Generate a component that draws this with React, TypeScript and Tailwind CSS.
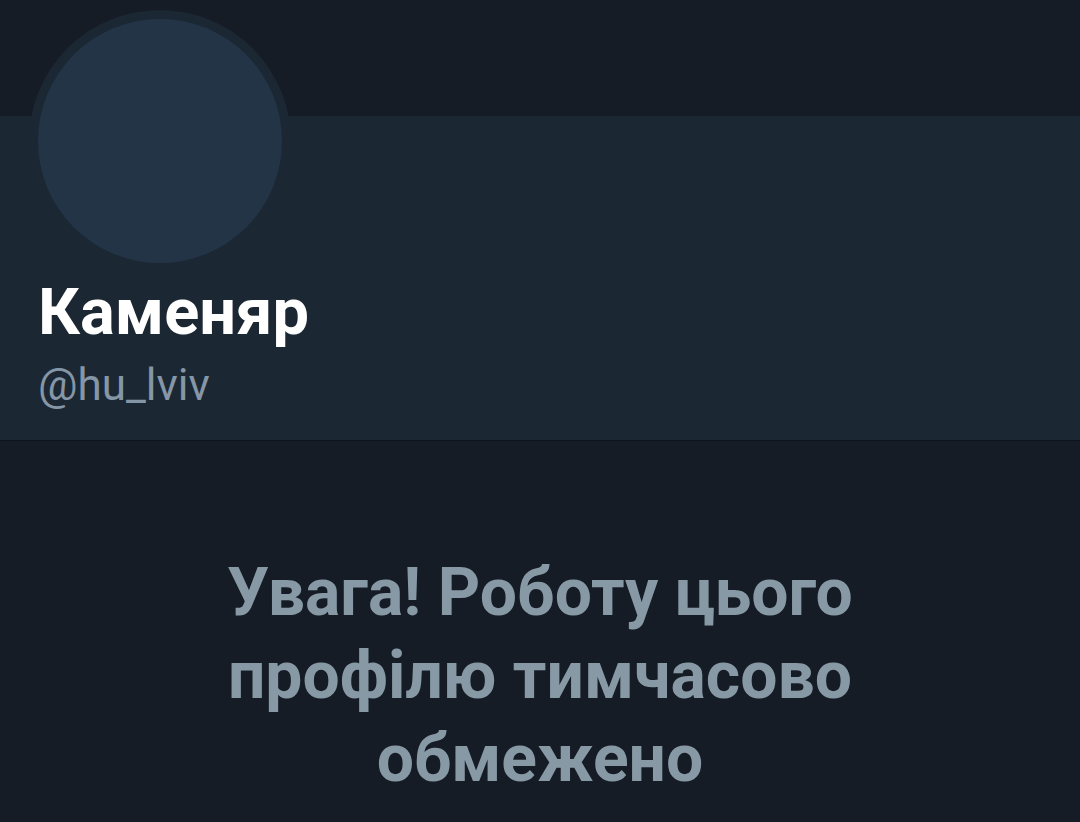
export default function App() {
  return (
    <div className="flex h-[822px] w-[1080px] flex-col overflow-hidden bg-[#151c26] font-['Roboto',sans-serif]">
      <div className="h-[116px] shrink-0 bg-[#151c26]" />
      <section className="relative h-[325px] shrink-0 border-b border-[#0e141b] bg-[#1c2734] px-[38px]">
        <div className="absolute left-[29px] top-[-106px] h-[262px] w-[262px] rounded-full bg-[#1c2734] p-[9px]">
          <div className="h-full w-full rounded-full bg-[#243447]" />
        </div>
        <div className="pt-[158px]">
          <h1 className="text-[65px] font-bold leading-[76px] text-white">Каменяр</h1>
          <p className="mt-[10px] text-[44px] font-normal leading-[50px] text-[#8596a6]">@hu_lviv</p>
        </div>
      </section>
      <div className="flex flex-1 justify-center pt-[110px]">
        <p className="w-[720px] text-center text-[66px] font-bold leading-[83px] text-[#8899a6]">
          Увага! Роботу цього профілю тимчасово обмежено
        </p>
      </div>
    </div>
  );
}
